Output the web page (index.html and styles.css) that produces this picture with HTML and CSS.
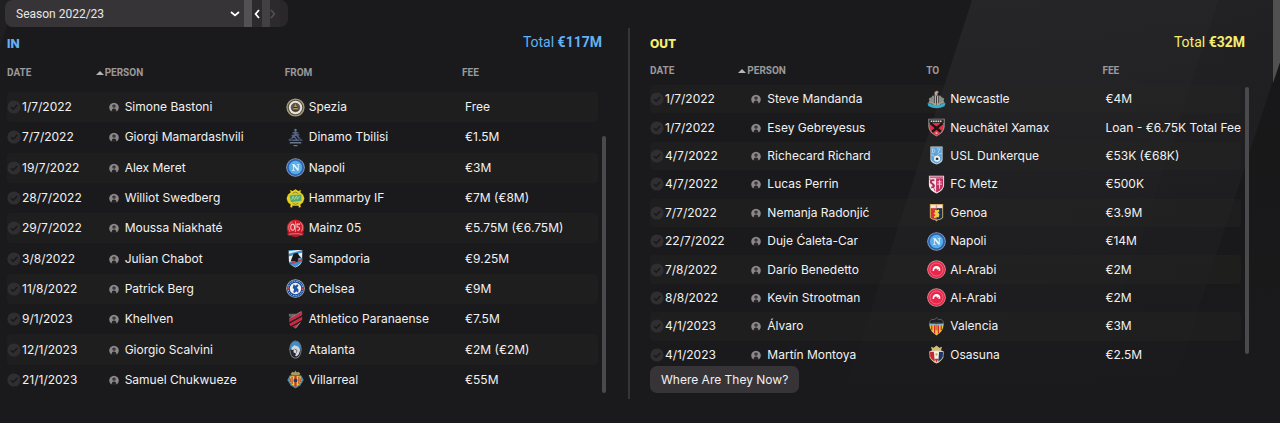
FILE: index.html
```
<!DOCTYPE html>
<html lang="en">
<head>
    <meta charset="UTF-8">
    <meta name="viewport" content="width=device-width, initial-scale=1.0">
    <title>Transfers</title>
    <link rel="stylesheet" href="styles.css">
</head>
<body>
    <svg class="sprite" aria-hidden="true">
        <symbol id="check" viewBox="0 0 14 14">
            <circle cx="7" cy="7" r="6.6" fill="#302e30"/>
            <path d="M4 7.2l2.2 2.1 4-4.3" fill="none" stroke="#191919" stroke-width="1.5"/>
        </symbol>
        <symbol id="person" viewBox="0 0 10 10">
            <path d="M2 9.2A4.8 4.8 0 1 1 8 9.2Z" fill="#8d878a"/>
            <circle cx="5" cy="4.1" r="1.7" fill="#252425"/>
            <path d="M2.6 10Q2.6 6.6 5 6.6T7.4 10z" fill="#252425"/>
            <circle cx="5" cy="4.1" r=".7" fill="#6a6668"/>
        </symbol>

        <!-- club crests -->
        <symbol id="spezia" viewBox="0 0 20 20">
            <circle cx="10" cy="10" r="9.6" fill="#a99a76"/>
            <circle cx="10" cy="10" r="8.2" fill="#5b5445"/>
            <circle cx="10" cy="10" r="7" fill="#e9e7e2"/>
            <circle cx="10" cy="10" r="5" fill="#5a564d"/>
            <path d="M10 6l3 6.5H7z" fill="#b39a5c"/>
            <path d="M8 10h4M7 12.6h6" stroke="#2b2925" stroke-width="1"/>
        </symbol>
        <symbol id="dinamo" viewBox="0 0 20 20">
            <circle cx="10" cy="2.2" r="1.3" fill="#69748c"/>
            <path d="M10 3v5M7 5h6M6 8l8-1M5 12l5-6 5 6M3 13h14M8 8l4 5" fill="none" stroke="#566481" stroke-width="1.6"/>
            <path d="M2 12l4-2 1 4M18 13l-4-3-1 4" fill="#36435f"/>
            <path d="M4 15.5h12M8 18.5h4" stroke="#6e7789" stroke-width="1.4"/>
        </symbol>
        <symbol id="napoli" viewBox="0 0 20 20">
            <circle cx="10" cy="10" r="9.8" fill="#8ba3bf"/>
            <circle cx="10" cy="10" r="8.9" fill="#2a62b4"/>
            <circle cx="10" cy="10" r="7" fill="#5aaee8"/>
            <path d="M6.4 6.6h2.6l3.4 4.4V7.4h-1v-.8h2.8v.8h-.8v6h-1.2L8.2 8.6v4h1v.8H6.4v-.8h.9V7.4h-.9z" fill="#e9f4fb"/>
        </symbol>
        <symbol id="hammarby" viewBox="0 0 20 20">
            <path d="M5 3.4L4 1l3 1.2L10 .2l3 2L16 1l-1 2.4 3 2.6 1.4 4-1.4 4-3 2.6 1 3-2.4-2h-7.2L4 19.6l1-3L2 14 .6 10 2 6z" fill="#e8cf1d"/>
            <circle cx="10" cy="9.6" r="5.8" fill="#cfc838"/>
            <path d="M3.8 6.8l12.4-1v6.6l-11 1.4z" fill="#4fa873"/>
            <path d="M6 11.6l1.4-4 1.6 3.6 2-4 1 3.6 2.4-3.4" fill="none" stroke="#a9d8a8" stroke-width=".9"/>
            <path d="M7 4.6l3-1.4 3 1.4M7 15.2l3 1 3-1" fill="none" stroke="#7d7a28" stroke-width=".8"/>
            <path d="M6 17.4v2.2M14 17.4v2.2" stroke="#d9d9cf" stroke-width="1.2"/>
        </symbol>
        <symbol id="mainz" viewBox="0 0 20 20">
            <circle cx="10" cy="9.6" r="9.2" fill="#d31c2a"/>
            <ellipse cx="7" cy="8.6" rx="2" ry="3.2" fill="none" stroke="#ecc4c4" stroke-width="1.1"/>
            <path d="M14.8 5.4h-3.2v3c3-.8 4 3.2.4 3.8" fill="none" stroke="#ecc4c4" stroke-width="1.1"/>
            <path d="M4.2 13.4C1.8 9 2.8 4.6 6.6 2.8M10 2.4V14M15 3.4c2.6 2.4 3 6 1.4 9.6" fill="none" stroke="#eba7aa" stroke-width=".8"/>
            <path d="M1 14.4l4-.5h10l4 .5-1 3-4 .4-4 1.4-4-1.4-4-.4z" fill="#b4192a"/>
            <path d="M3 16.2l3-.6h8l3 .6" fill="none" stroke="#e4a7aa" stroke-width=".8"/>
        </symbol>
        <symbol id="sampdoria" viewBox="0 0 20 20">
            <path d="M3 1h14v11q0 4-7 7.4Q3 16 3 12z" fill="#e9edf0"/>
            <path d="M3 1h14v3L3 8z" fill="#3f90cb"/>
            <path d="M3 2.4L12 1h5L3 5z" fill="#e9edf0"/>
            <path d="M17 4L3 8.2v1.6L17 6z" fill="#f3f3f3"/>
            <path d="M3 14L17 9v4.5Q14 17 10 19q-6-2-7-5z" fill="#3f90cb"/>
            <path d="M3.8 15L17 10.8V12L5 16z" fill="#cc3340"/>
            <path d="M8 5l4-1 2.4 3.6L16 9l-3 1-1 4-3-1.4L5 13l1.4-4z" fill="#151719"/>
        </symbol>
        <symbol id="chelsea" viewBox="0 0 20 20">
            <circle cx="10" cy="10" r="9.8" fill="#b9b7b0"/>
            <circle cx="10" cy="10" r="9" fill="#174a9c"/>
            <circle cx="10" cy="10" r="7.6" fill="none" stroke="#dbe3ef" stroke-width=".8" stroke-dasharray="1.6 1"/>
            <circle cx="10" cy="10" r="6" fill="#eef1f5"/>
            <path d="M8 5.5l2 1.5 2-1.6 1.2 1.8-1.8 2 1.8 1.8-.4 3.4-2-1.4-1.8 1.8-1.4-1 1-3L7 9.6z" fill="#2053a5"/>
            <circle cx="2.4" cy="10" r="1" fill="#c9363e"/><circle cx="17.6" cy="10" r="1" fill="#c9363e"/>
        </symbol>
        <symbol id="paranaense" viewBox="0 0 20 20">
            <path d="M3 4h8l-3 3H3z" fill="#68666a"/>
            <path d="M17 1.4v4.2L3.4 13V9.4zM17 7v3.6L4.8 17 3.4 14.4zM15.6 12.8L10 19.4l-3.6-2z" fill="#c92b43"/>
            <path d="M17 6.2L3.4 13.7M17 11.6L5.6 17.6" stroke="#2a2527" stroke-width=".9"/>
            <path d="M16 1.6L3.6 9M15 13l-5 6.2" stroke="#9a989b" stroke-width=".9"/>
        </symbol>
        <symbol id="atalanta" viewBox="0 0 20 20">
            <ellipse cx="10" cy="10" rx="6.4" ry="9.5" fill="#8b979f"/>
            <ellipse cx="10" cy="10" rx="5.6" ry="8.8" fill="#24272b"/>
            <path d="M10 1.2c3.4 0 5.6 4 5.6 8.8H4.4C4.4 5.2 6.6 1.2 10 1.2z" fill="#3a8fd0"/>
            <path d="M6 8l3-2.4 4 1.4 2 3.4-1.6 4.6-2 2-2-.6 1.4-2-3-1.6.4-2.8-2.4.4z" fill="#d3d8dc"/>
            <path d="M9 9.4l2.6 1.4-.6 2.6" fill="none" stroke="#555b61" stroke-width=".9"/>
        </symbol>
        <symbol id="villarreal" viewBox="0 0 20 20">
            <path d="M5 3.6l2-1.8 1.6.8L10 .4l1.4 2.2 1.6-.8 2 1.8-1 2H6z" fill="#a89a68"/>
            <path d="M4 5.4h12l2.6 5.2-3.4 5.4L10 19.6 4.8 16l-3.4-5.4z" fill="#4d86b8"/>
            <path d="M5 6.4h10l1.8 4.6-2.8 4-4 3-4-3-2.8-4z" fill="#eecb30"/>
            <path d="M6.4 6.8v8M13.6 6.8v8M4.4 9v3.6M15.6 9v3.6" stroke="#a92f34" stroke-width="1.1"/>
            <path d="M8.8 6h2.4v11L10 18l-1.2-1z" fill="#c8342d"/>
            <circle cx="10" cy="11" r="2" fill="#1f3d7b"/>
        </symbol>
        <symbol id="newcastle" viewBox="0 0 20 20">
            <path d="M8 6V2l3-1.6v1l1.6.6L11 3.4V6z" fill="#b8a59a"/>
            <path d="M5.6 6h8.8v8q-1 3-4.4 4-3.4-1-4.4-4z" fill="#bfbcae"/>
            <path d="M7 6h1.2v9H7zM9.4 6h1.2v10H9.4zM11.8 6H13v9h-1.2z" fill="#3a3b3b"/>
            <path d="M5 7L1.8 9.2 2.6 11 1 14.6h4.6zM15 7l3.2 2.2-.8 1.8 1.6 3.6h-4.6z" fill="#8b9090"/>
            <path d="M.4 14l4 .8q5.6 2 11.2 0l4-.8-1.2 3Q10 21.4 1.6 17z" fill="#3babcc"/>
            <path d="M3.6 12.6l3 1.6 3.4.6 3.4-.6 3-1.6" fill="none" stroke="#bba85f" stroke-width="1"/>
        </symbol>
        <symbol id="xamax" viewBox="0 0 20 20">
            <path d="M1.4.8h17.2V9q0 6-8.6 10.6Q1.4 15 1.4 9z" fill="#9b9d9e"/>
            <path d="M2.4 1.6h15.2V9q0 5.4-7.6 9.6Q2.4 14.4 2.4 9z" fill="#e23143"/>
            <path d="M2.4 1.6h15.2v3.6H2.4z" fill="#2a2b2c"/>
            <path d="M4 3.4h12" stroke="#ddd" stroke-width="1.4" stroke-dasharray="1.6 .8"/>
            <path d="M3.6 5.4L14.6 14.4M16.4 5.4L5.4 14.4" stroke="#161616" stroke-width="2.6"/>
            <circle cx="10" cy="16" r="1.2" fill="#f0a6ad"/>
        </symbol>
        <symbol id="dunkerque" viewBox="0 0 20 20">
            <path d="M3.6.6h12.8v13.6q0 3-6.4 5.4-6.4-2.4-6.4-5.4z" fill="#c9dcea"/>
            <path d="M4.4 1.4h11.2v12.4q0 2.6-5.6 4.8-5.6-2.2-5.6-4.8z" fill="#5ea4d8"/>
            <path d="M5.8 3v4h1.4l1.2-2L7 3zM10.6 3h3l-2.2 4.4M4.4 9l5.4 3 3-4h2.8" fill="none" stroke="#c5def0" stroke-width=".8"/>
            <circle cx="10.6" cy="13.4" r="3.2" fill="#f0f3f4"/>
            <path d="M9.6 12.4h2l.6 1.6-1.6 1-1.6-1z" fill="#252b33"/>
        </symbol>
        <symbol id="metz" viewBox="0 0 20 20">
            <path d="M2 .8h16v9.8q0 5.4-8 9-8-3.6-8-9z" fill="#efe9ec"/>
            <path d="M9.6 3.4H17v7q0 4.8-7.4 8z" fill="#c22e60"/>
            <path d="M2.8 1.4h14.4v2H2.8z" fill="#d3658b"/>
            <path d="M7.8 5.6C4 4.6 3 7.6 5.4 9s3.2 4.2-1 4" fill="none" stroke="#b12552" stroke-width="1.9"/>
            <path d="M3 4l5.6 13" stroke="#c22e60" stroke-width=".9"/>
            <path d="M13.2 5v9.4M11 7.2h4.4M10.6 9.6h5.2" stroke="#efd3dd" stroke-width="1"/>
        </symbol>
        <symbol id="genoa" viewBox="0 0 20 20">
            <path d="M3 1h14v14.6q-2 2.4-5.6 2.6L10 19.6l-1.4-1.4Q5 18 3 15.6z" fill="#c9ad60"/>
            <path d="M4 2h12v3.4H4z" fill="#f1e4e2"/>
            <path d="M4 5.4h6v12Q6 17.2 4 15.2z" fill="#d6303a"/>
            <path d="M10 5.4h6v9.8q-2 2-6 2.2z" fill="#142f64"/>
            <path d="M9.2 1.8h1.6v3.6H9.2z" fill="#e09a9e"/>
            <path d="M8 7l2.4.6 2-.8.8 2-1.6 1 1.6 2-1 3.4-1.6-.4L8 16l-1-1.4 2-1.8L7 11l1.6-1.4z" fill="#ecd13c"/>
        </symbol>
        <symbol id="alarabi" viewBox="0 0 20 20">
            <circle cx="10" cy="10" r="9.8" fill="#cf9aa0"/>
            <circle cx="10" cy="10" r="9" fill="#e8274a"/>
            <circle cx="10" cy="10" r="6.8" fill="none" stroke="#f4758a" stroke-width=".8"/>
            <path d="M6 11.6C5.6 8.2 8 6.2 10.4 6.4c2.6.2 4 2.2 3.6 5l-2 .2.4-2-2 .6-.4-1.4C8.6 8.8 7.4 9.8 7.4 11.6z" fill="#fff"/>
        </symbol>
        <symbol id="valencia" viewBox="0 0 20 20">
            <path d="M3 5l2-2.6 3 .4L10 .6l2 2.2 3-.4L17 5l.4 3H2.6z" fill="#1d1f21" stroke="#777c80" stroke-width=".7"/>
            <path d="M2.6 6.8h14.8v3H2.6z" fill="#83b5ce"/>
            <path d="M2.8 9h14.4q.2 6-7.2 10.4Q2.6 15 2.8 9z" fill="#f0c430"/>
            <path d="M5 9v5M8 9v8.4M12 9v8.4M15 9v5" stroke="#cf2a2c" stroke-width="1.3"/>
            <path d="M8.6 8h2.8v6H8.6z" fill="#d9772d"/>
            <path d="M4 6.8q3-2.6 6-1.6 3-1 6 1.6-3-.8-6 .4-3-1.2-6-.4z" fill="#35383b"/>
        </symbol>
        <symbol id="osasuna" viewBox="0 0 20 20">
            <path d="M5.4 6L4.2 1.8l2.8 1L10 .6l3 2.2 2.8-1L14.6 6z" fill="#d5bd6e"/>
            <path d="M2.4 6.8l3-1.2h9.2l3 1.2-.4 6Q15.4 17 10 19.6 4.6 17 2.8 12.8z" fill="#d8cfa8"/>
            <path d="M3.2 7.4H8v10Q4.2 15.4 3.4 12z" fill="#c5262f"/>
            <path d="M12 7.4h4.8l-.2 4.6q-.8 3.4-4.6 5.4z" fill="#1d3468"/>
            <path d="M7.2 6.6h5.6L12 14l-2 3.4L8 14z" fill="#f2f0e6"/>
            <path d="M8.2 14.4h3.6L10 18.4z" fill="#c5262f"/>
            <circle cx="10" cy="10" r="1.2" fill="#c6a64f"/>
        </symbol>
    </svg>

    <div class="edge"></div>

    <div class="season-bar">
        <label class="season">
            <select aria-label="Season">
                <option>Season 2022/23</option>
            </select>
            <svg class="chevron" viewBox="0 0 10 6"><path d="M1 1l4 3.4L9 1" fill="none" stroke="#fff" stroke-width="1.8"/></svg>
        </label>
        <button class="step" type="button" aria-label="Previous season">
            <svg viewBox="0 0 6 10"><path d="M5 1L1.6 5 5 9" fill="none" stroke="#fff" stroke-width="1.8"/></svg>
        </button>
        <button class="step next" type="button" aria-label="Next season" disabled>
            <svg viewBox="0 0 6 10"><path d="M1 1l3.4 4L1 9" fill="none" stroke="#545154" stroke-width="1.6"/></svg>
        </button>
    </div>

    <main class="transfers">
        <section class="panel in">
            <header class="panel-head">
                <h2>IN</h2>
                <p class="total">Total <b>€117M</b></p>
            </header>
            <div class="list">
                <table>
                    <thead>
                        <tr><th>DATE</th><th><i class="sort"></i>PERSON</th><th>FROM</th><th>FEE</th></tr>
                    </thead>
                    <tbody id="in-rows"></tbody>
                </table>
                <div class="scrollbar"></div>
            </div>
        </section>

        <section class="panel out">
            <header class="panel-head">
                <h2>OUT</h2>
                <p class="total">Total <b>€32M</b></p>
            </header>
            <div class="list">
                <table>
                    <thead>
                        <tr><th>DATE</th><th><i class="sort"></i>PERSON</th><th>TO</th><th>FEE</th></tr>
                    </thead>
                    <tbody id="out-rows"></tbody>
                </table>
                <div class="scrollbar"></div>
            </div>
            <button class="where-btn" type="button">Where Are They Now?</button>
        </section>
    </main>

    <script>
        const playersIn = [
            ['1/7/2022', 'Simone Bastoni', 'spezia', 'Spezia', 'Free'],
            ['7/7/2022', 'Giorgi Mamardashvili', 'dinamo', 'Dinamo Tbilisi', '€1.5M'],
            ['19/7/2022', 'Alex Meret', 'napoli', 'Napoli', '€3M'],
            ['28/7/2022', 'Williot Swedberg', 'hammarby', 'Hammarby IF', '€7M (€8M)'],
            ['29/7/2022', 'Moussa Niakhaté', 'mainz', 'Mainz 05', '€5.75M (€6.75M)'],
            ['3/8/2022', 'Julian Chabot', 'sampdoria', 'Sampdoria', '€9.25M'],
            ['11/8/2022', 'Patrick Berg', 'chelsea', 'Chelsea', '€9M'],
            ['9/1/2023', 'Khellven', 'paranaense', 'Athletico Paranaense', '€7.5M'],
            ['12/1/2023', 'Giorgio Scalvini', 'atalanta', 'Atalanta', '€2M (€2M)'],
            ['21/1/2023', 'Samuel Chukwueze', 'villarreal', 'Villarreal', '€55M']
        ];

        const playersOut = [
            ['1/7/2022', 'Steve Mandanda', 'newcastle', 'Newcastle', '€4M'],
            ['1/7/2022', 'Esey Gebreyesus', 'xamax', 'Neuchâtel Xamax', 'Loan - €6.75K Total Fee'],
            ['4/7/2022', 'Richecard Richard', 'dunkerque', 'USL Dunkerque', '€53K (€68K)'],
            ['4/7/2022', 'Lucas Perrin', 'metz', 'FC Metz', '€500K'],
            ['7/7/2022', 'Nemanja Radonjić', 'genoa', 'Genoa', '€3.9M'],
            ['22/7/2022', 'Duje Ćaleta-Car', 'napoli', 'Napoli', '€14M'],
            ['7/8/2022', 'Darío Benedetto', 'alarabi', 'Al-Arabi', '€2M'],
            ['8/8/2022', 'Kevin Strootman', 'alarabi', 'Al-Arabi', '€2M'],
            ['4/1/2023', 'Álvaro', 'valencia', 'Valencia', '€3M'],
            ['4/1/2023', 'Martín Montoya', 'osasuna', 'Osasuna', '€2.5M']
        ];

        function fillRows(id, players) {
            document.getElementById(id).innerHTML = players.map(([date, name, crest, club, fee]) => `
                <tr>
                    <td><div class="cell date"><svg class="check"><use href="#check"/></svg>${date}</div></td>
                    <td><div class="cell person"><svg class="face"><use href="#person"/></svg>${name}</div></td>
                    <td><div class="cell club"><svg class="crest"><use href="#${crest}"/></svg>${club}</div></td>
                    <td><div class="cell fee">${fee}</div></td>
                </tr>`).join('');
        }

        fillRows('in-rows', playersIn);
        fillRows('out-rows', playersOut);
    </script>
</body>
</html>
```
FILE: styles.css
```
* {
    box-sizing: border-box;
}

body {
    margin: 0;
    min-height: 100vh;
    font-family: Inter, "Liberation Sans", sans-serif;
    font-size: 12px;
    line-height: 16px;
    color: #f2f1f2;
    background-color: #1a1a1c;
    background-image:
        linear-gradient(180deg, rgba(26, 26, 28, 0) 0, #1a1a1c 400px),
        linear-gradient(108deg, #202022 0, #202022 14px, #1a1a1c 15px, #1a1a1c 924px, #262628 925px, #252527 1158px, #222224 1159px, #212123 1235px, #171718 1236px);
}

.sprite {
    display: none;
}

/* light strip at the right edge of the window */
.edge {
    position: absolute;
    top: 0;
    right: 0;
    width: 7px;
    height: 83px;
    background: #515152;
    clip-path: polygon(0 0, 100% 0, 100% 75%, 0 100%);
}

/* season picker */
.season-bar {
    display: flex;
    width: 283px;
    height: 27px;
    margin-left: 5px;
    background: #29272a;
    border-radius: 8px;
    overflow: hidden;
}

.season {
    display: flex;
    align-items: center;
    width: 239px;
    background: #373438;
}

.season select {
    flex: 1;
    height: 26px;
    padding: 0 11px;
    border: none;
    appearance: none;
    background: none;
    color: #e8e7e8;
    font-family: Roboto, sans-serif;
    font-size: 12px;
}

.chevron {
    width: 10px;
    height: 6px;
    margin-right: 4px;
}

.step {
    display: flex;
    align-items: center;
    width: 18px;
    padding: 0 0 0 2px;
    border: none;
    border-left: 8px solid #545153;
    background: #2c2a2d;
}

.step.next {
    border-left-color: #434042;
    padding: 0;
}

.step svg {
    width: 6px;
    height: 10px;
}

/* in / out panels */
.transfers {
    display: flex;
    padding: 1px 31px 0 7px;
}

.panel {
    flex: 1;
    height: 371px;
}

.panel.in {
    padding-right: 22px;
    border-right: 2px solid #353436;
}

.panel.out {
    padding-left: 20px;
}

.panel-head {
    display: flex;
    justify-content: space-between;
    padding-right: 4px;
}

.panel-head h2 {
    margin: 8px 0 0;
    font-size: 12px;
    font-weight: 800;
    line-height: 16px;
}

.total {
    margin: 4px 0 0;
    font-family: Roboto, sans-serif;
    font-size: 14px;
    line-height: 20px;
}

.in h2,
.in .total {
    color: #61b2f5;
}

.out h2,
.out .total {
    color: #f6ee70;
}

.list {
    display: flex;
    gap: 4px;
}

table {
    flex: 1;
    height: 343px;
    table-layout: fixed;
    border-collapse: separate;
    border-spacing: 0;
}

.out table {
    height: 317px;
}

th {
    height: 40px;
    padding: 2px 0 0;
    font-family: Roboto, sans-serif;
    font-size: 10px;
    font-weight: 700;
    line-height: 12px;
    text-align: left;
    color: #9b999b;
}

.out th {
    height: 33px;
    padding-top: 4px;
}

th:nth-child(1) { width: 15%; }
th:nth-child(2) { width: 32%; }
th:nth-child(3) { width: 30%; }

.out th:nth-child(2) { width: 32%; }
.out th:nth-child(3) { width: 30%; }

.sort {
    display: inline-block;
    margin: 0 1px 1px 0;
    border: 4px solid transparent;
    border-top: none;
    border-bottom: 4px solid #b5b3b5;
}

td {
    padding: 0;
    white-space: nowrap;
}

tbody tr:nth-child(odd) td {
    background: rgba(38, 38, 36, 0.4);
}

td:first-child { border-radius: 4px 0 0 4px; }
td:last-child { border-radius: 0 4px 4px 0; }

.cell {
    display: flex;
    align-items: center;
    height: 20px;
}

.check {
    width: 14px;
    height: 14px;
    margin-right: 1px;
}

.person {
    gap: 6px;
    padding-left: 13px;
}

.face {
    width: 10px;
    height: 10px;
}

.club {
    gap: 4px;
    padding-left: 1px;
}

.crest {
    width: 19px;
    height: 19px;
}

.fee {
    padding-left: 3px;
}

.scrollbar {
    width: 4px;
    margin: 84px 0 2px;
    background: #4a494b;
    border-radius: 2px;
}

.out .scrollbar {
    margin: 35px 0 15px;
}

.where-btn {
    position: relative;
    display: block;
    height: 27px;
    margin-top: -3px;
    padding: 0 11px;
    border: none;
    border-radius: 7px;
    background: #373438;
    color: #f2f1f2;
    font-family: inherit;
    font-size: 12px;
}
```
